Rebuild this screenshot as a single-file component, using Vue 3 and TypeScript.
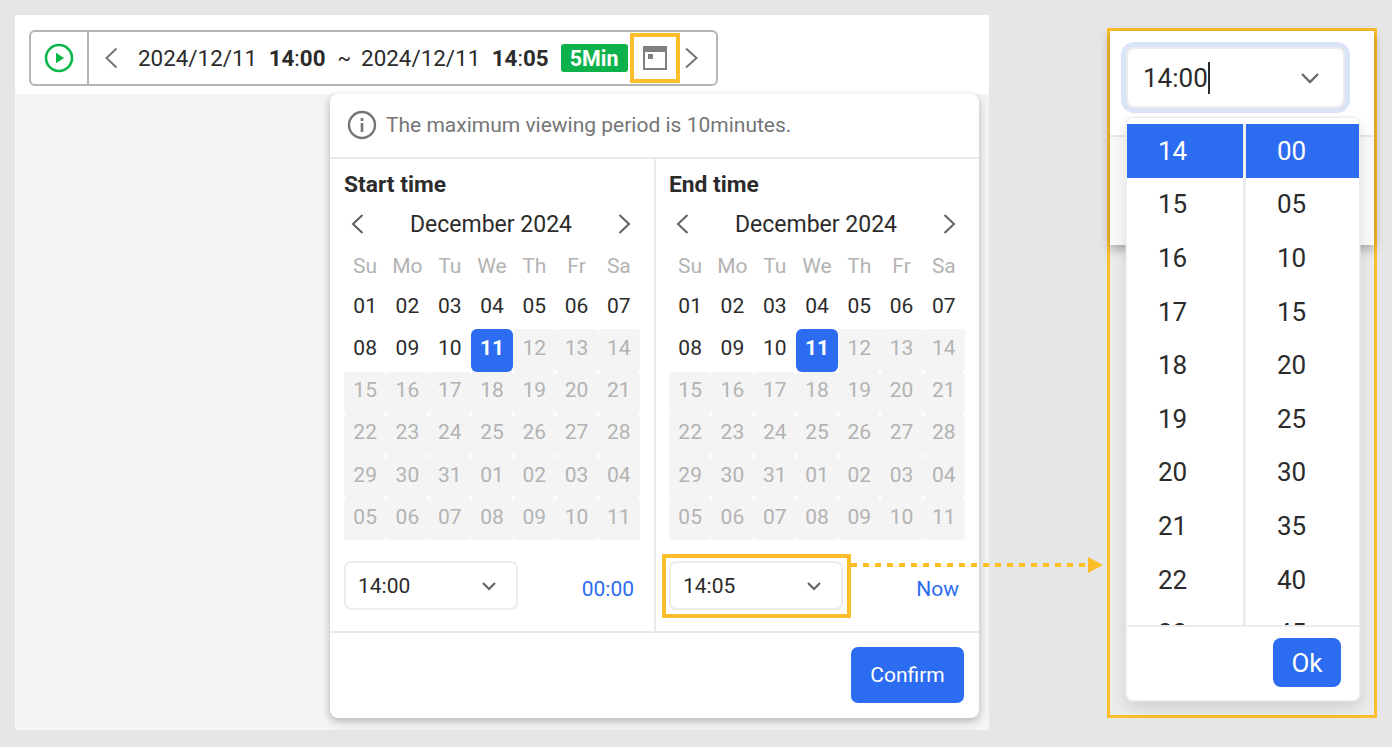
<script setup lang="ts">
const weekdays = ['Su', 'Mo', 'Tu', 'We', 'Th', 'Fr', 'Sa']
const pad = (n: number) => String(n).padStart(2, '0')
const days = [
  ...Array.from({ length: 31 }, (_, i) => pad(i + 1)),
  ...Array.from({ length: 11 }, (_, i) => pad(i + 1)),
]
const columns = [
  { title: 'Start time', time: '14:00', link: '00:00', marked: false },
  { title: 'End time', time: '14:05', link: 'Now', marked: true },
]
const hours = Array.from({ length: 10 }, (_, i) => String(14 + i))
const minutes = Array.from({ length: 10 }, (_, i) => pad(i * 5))
</script>

<template>
  <div class="page">
    <section class="left">
      <header class="topbar">
        <div class="toolbar">
          <div class="play">
            <svg width="30" height="30" viewBox="0 0 30 30" fill="none">
              <circle cx="15" cy="15" r="13" stroke="#0ab84a" stroke-width="2.6" />
              <path d="M12 9.8 20 15l-8 5.2z" fill="#0ab84a" />
            </svg>
          </div>
          <div class="range">
            <svg class="chev" width="14" height="22" viewBox="0 0 14 22" fill="none">
              <path d="M12.5 1.5 2.5 11l10 9.5" stroke="#757575" stroke-width="2" />
            </svg>
            <span class="date first">2024/12/11</span>
            <b class="hour">14<i>:</i>00</b>
            <span class="tilde">~</span>
            <span class="date">2024/12/11</span>
            <b class="hour">14<i>:</i>05</b>
            <span class="badge">5Min</span>
            <span class="cal-box">
              <svg width="24" height="24" viewBox="0 0 24 24" fill="none">
                <rect x="1" y="1" width="22" height="22" fill="#fff" stroke="#808080" stroke-width="2" />
                <rect x="1" y="1" width="22" height="5" fill="#808080" />
                <rect x="5" y="8" width="5" height="5" fill="#808080" />
              </svg>
            </span>
            <svg class="chev next" width="14" height="22" viewBox="0 0 14 22" fill="none">
              <path d="M2 1.500 12.500 11 2 20.500" stroke="#757575" stroke-width="2" />
            </svg>
          </div>
        </div>
      </header>

      <div class="stage">
        <div class="popup">
          <div class="info">
            <svg width="30" height="30" viewBox="0 0 30 30" fill="none">
              <circle cx="15" cy="15" r="13" stroke="#757575" stroke-width="2.4" />
              <rect x="13.7" y="13" width="2.6" height="9" fill="#757575" />
              <rect x="13.7" y="8" width="2.6" height="3" fill="#757575" />
            </svg>
            <span>The maximum viewing period is 10minutes.</span>
          </div>

          <div class="cols">
            <div v-for="col in columns" :key="col.title" class="col">
              <h3 class="col-title">{{ col.title }}</h3>
              <div class="month">
                <svg width="14" height="22" viewBox="0 0 14 22" fill="none">
                  <path d="M12.5 2 3 11l9.500 9" stroke="#616161" stroke-width="2" />
                </svg>
                <span>December 2024</span>
                <svg width="14" height="22" viewBox="0 0 14 22" fill="none">
                  <path d="M1.500 2 11 11l-9.500 9" stroke="#616161" stroke-width="2" />
                </svg>
              </div>
              <div class="grid">
                <span v-for="w in weekdays" :key="w" class="wd">{{ w }}</span>
                <span
                  v-for="(d, i) in days"
                  :key="i"
                  class="day"
                  :class="{ selected: i === 10, disabled: i > 10 }"
                >{{ d }}</span>
              </div>
              <div class="time-row">
                <div class="select" :class="{ marked: col.marked }">
                  <span>{{ col.time }}</span>
                  <svg width="16" height="10" viewBox="0 0 16 10" fill="none">
                    <path d="M2 2l6 6 6-6" stroke="#616161" stroke-width="2" />
                  </svg>
                </div>
                <a class="link">{{ col.link }}</a>
              </div>
            </div>
          </div>

          <div class="foot">
            <button class="confirm">Confirm</button>
          </div>
        </div>
      </div>
    </section>

    <section class="right">
      <div class="back-card">
        <div class="focus-select">
          <span class="typed">14:00</span>
          <svg width="20" height="12" viewBox="0 0 20 12" fill="none">
            <path d="M2 2l8 8 8-8" stroke="#6b6b6b" stroke-width="2.4" />
          </svg>
        </div>
      </div>
      <div class="dropdown">
        <div class="lists">
          <ul class="list hours">
            <li v-for="(h, i) in hours" :key="h" :class="{ on: i === 0 }">{{ h }}</li>
          </ul>
          <ul class="list mins">
            <li v-for="(m, i) in minutes" :key="m" :class="{ on: i === 0 }">{{ m }}</li>
          </ul>
        </div>
        <div class="drop-foot">
          <button class="ok">Ok</button>
        </div>
      </div>
    </section>

    <div class="connector"><span class="arrow"></span></div>
  </div>
</template>

<style>
html, body { margin: 0; background: #e6e6e6; }
</style>

<style scoped>
.page {
  position: relative;
  width: 1392px;
  height: 747px;
  overflow: hidden;
  background: #e6e6e6;
  font-family: Roboto, "Liberation Sans", sans-serif;
  color: #2b2b2b;
}
.left {
  position: absolute;
  left: 15px;
  top: 15px;
  width: 974px;
  height: 715px;
  display: flex;
  flex-direction: column;
  background: #f4f4f4;
}
.topbar {
  height: 79px;
  flex: none;
  background: #fff;
  padding: 15px 0 0 14px;
  box-sizing: border-box;
}
.toolbar {
  display: flex;
  width: 689px;
  height: 56px;
  box-sizing: border-box;
  border: 2px solid #b5b5b5;
  border-radius: 6px;
  background: #fff;
}
.play {
  width: 58px;
  flex: none;
  box-sizing: border-box;
  border-right: 2px solid #b5b5b5;
  display: flex;
  align-items: center;
  justify-content: center;
}
.range {
  flex: 1;
  display: flex;
  align-items: center;
  padding-left: 15px;
  font-size: 22.4px;
  white-space: nowrap;
}
.chev { flex: none; }
.chev.next { margin-left: 4px; }
.date { margin-left: 10px; }
.date.first { margin-left: 20px; }
.hour { margin-left: 11.500px; font-weight: 700; }
.hour i { font-style: normal; font-weight: 400; }
.tilde { margin-left: 12px; font-size: 20px; }
.badge {
  margin-left: 12px;
  width: 67px;
  height: 28px;
  flex: none;
  display: flex;
  align-items: center;
  justify-content: center;
  background: #0db14b;
  color: #fff;
  font-size: 21.400px;
  font-weight: 700;
  border-radius: 3px;
}
.cal-box {
  width: 50px;
  height: 50px;
  margin-left: 2px;
  flex: none;
  box-sizing: border-box;
  border: 4px solid #fcbf2b;
  display: flex;
  align-items: center;
  justify-content: center;
}
.stage {
  flex: 1;
  padding-left: 315px;
}
.popup {
  width: 649px;
  height: 624px;
  display: flex;
  flex-direction: column;
  background: #fff;
  border-radius: 8px;
  box-shadow: 0 3px 8px rgba(0, 0, 0, 0.28);
}
.info {
  height: 65px;
  flex: none;
  box-sizing: border-box;
  border-bottom: 2px solid #eaeaea;
  display: flex;
  align-items: center;
  gap: 9px;
  padding: 0 0 2px 17px;
  font-size: 21px;
  color: #757575;
}
.cols {
  flex: 1;
  display: flex;
  min-height: 0;
}
.col {
  width: 324px;
  flex: none;
  padding: 12px 14px 0;
  box-sizing: border-box;
}
.col + .col {
  width: 325px;
  border-left: 2px solid #eaeaea;
  padding-left: 13px;
}
.col-title {
  margin: 0;
  height: 28px;
  line-height: 28px;
  font-size: 22.800px;
  font-weight: 700;
}
.month {
  height: 42px;
  margin-top: 4px;
  display: flex;
  align-items: center;
  justify-content: space-between;
  padding: 0 8px 0 6px;
  font-size: 23px;
}
.grid {
  display: grid;
  grid-template-columns: repeat(7, 1fr);
  grid-auto-rows: 42.2px;
  width: 296px;
  font-size: 21px;
}
.wd, .day {
  display: flex;
  align-items: center;
  justify-content: center;
  padding-bottom: 5px;
  box-sizing: border-box;
}
.wd { color: #b3b3b3; padding-bottom: 1px; }
.day.disabled {
  background: #f4f4f4;
  color: #b3b3b3;
  border-radius: 4px;
}
.day.selected {
  background: #2b6cf0;
  color: #fff;
  font-weight: 700;
  border-radius: 6px;
}
.time-row {
  margin-top: 21px;
  display: flex;
  justify-content: space-between;
  padding-right: 6px;
}
.select {
  position: relative;
  width: 174px;
  height: 49px;
  box-sizing: border-box;
  border: 2px solid #ececec;
  border-radius: 7px;
  display: flex;
  align-items: center;
  justify-content: space-between;
  padding: 0 19px 0 12px;
  font-size: 21px;
}
.select.marked::after {
  content: "";
  position: absolute;
  inset: -9px -10px -10px -9px;
  border: 4px solid #fcbf2b;
  pointer-events: none;
}
.link {
  align-self: center;
  margin-top: 7px;
  color: #2b6cf0;
  font-size: 21px;
}
.foot {
  height: 87px;
  flex: none;
  box-sizing: border-box;
  border-top: 2px solid #eaeaea;
  display: flex;
  justify-content: flex-end;
  padding: 14px 15px 0 0;
}
.confirm {
  width: 113px;
  height: 56px;
  border: 0;
  border-radius: 7px;
  background: #2b6cf0;
  color: #fff;
  font: 400 21px Roboto, sans-serif;
}
.right {
  position: absolute;
  left: 1107px;
  top: 28px;
  width: 270px;
  height: 690px;
  box-sizing: border-box;
  border: 3px solid #fcbf2b;
  background: #ebebeb;
}
.back-card {
  height: 214px;
  box-sizing: border-box;
  padding: 16px 0 0 16px;
  background: linear-gradient(#fff 0, #fff 104px, #e8e8e8 104px, #e8e8e8 105.500px, #fafafa 105.500px);
  box-shadow: 0 4px 10px rgba(0, 0, 0, 0.3);
}
.focus-select {
  width: 219px;
  height: 61px;
  box-sizing: border-box;
  border: 2px solid #ececec;
  border-radius: 8px;
  background: #fff;
  display: flex;
  align-items: center;
  justify-content: space-between;
  padding: 0 23px 0 15px;
  font-size: 26px;
  box-shadow: 0 0 0 5px #dbe4f7;
}
.typed {
  border-right: 2px solid #2b2b2b;
  line-height: 32px;
}
.dropdown {
  position: absolute;
  left: 17px;
  top: 87px;
  width: 232px;
  height: 582px;
  display: flex;
  flex-direction: column;
  padding-top: 6px;
  box-sizing: border-box;
  background: #fff;
  border-radius: 6px;
  box-shadow: 0 0 0 1.500px #eeeeee, 0 6px 16px rgba(0, 0, 0, 0.14);
  overflow: hidden;
}
.lists {
  flex: 1;
  display: flex;
  min-height: 0;
  overflow: hidden;
}
.list {
  list-style: none;
  margin: 0;
  padding: 0;
  font-size: 26px;
}
.hours {
  width: 119px;
  border-right: 3px solid #ececec;
  box-sizing: border-box;
}
.mins { flex: 1; }
.list li {
  height: 53.6px;
  display: flex;
  align-items: center;
  padding-left: 31px;
}
.list li.on {
  background: #2b6cf0;
  color: #fff;
}
.drop-foot {
  height: 75px;
  flex: none;
  box-sizing: border-box;
  border-top: 2px solid #ececec;
  display: flex;
  justify-content: flex-end;
  padding: 11px 18px 0 0;
}
.ok {
  width: 68px;
  height: 49px;
  border: 0;
  border-radius: 8px;
  background: #2b6cf0;
  color: #fff;
  font: 400 26px Roboto, sans-serif;
}
.connector {
  position: absolute;
  left: 851px;
  top: 563px;
  width: 236px;
  height: 4px;
  background: repeating-linear-gradient(90deg, #fcbf2b 0 6px, transparent 6px 12px);
}
.arrow {
  position: absolute;
  left: 237px;
  top: -6.500px;
  border-left: 15px solid #fcbf2b;
  border-top: 8.500px solid transparent;
  border-bottom: 8.500px solid transparent;
}
</style>
